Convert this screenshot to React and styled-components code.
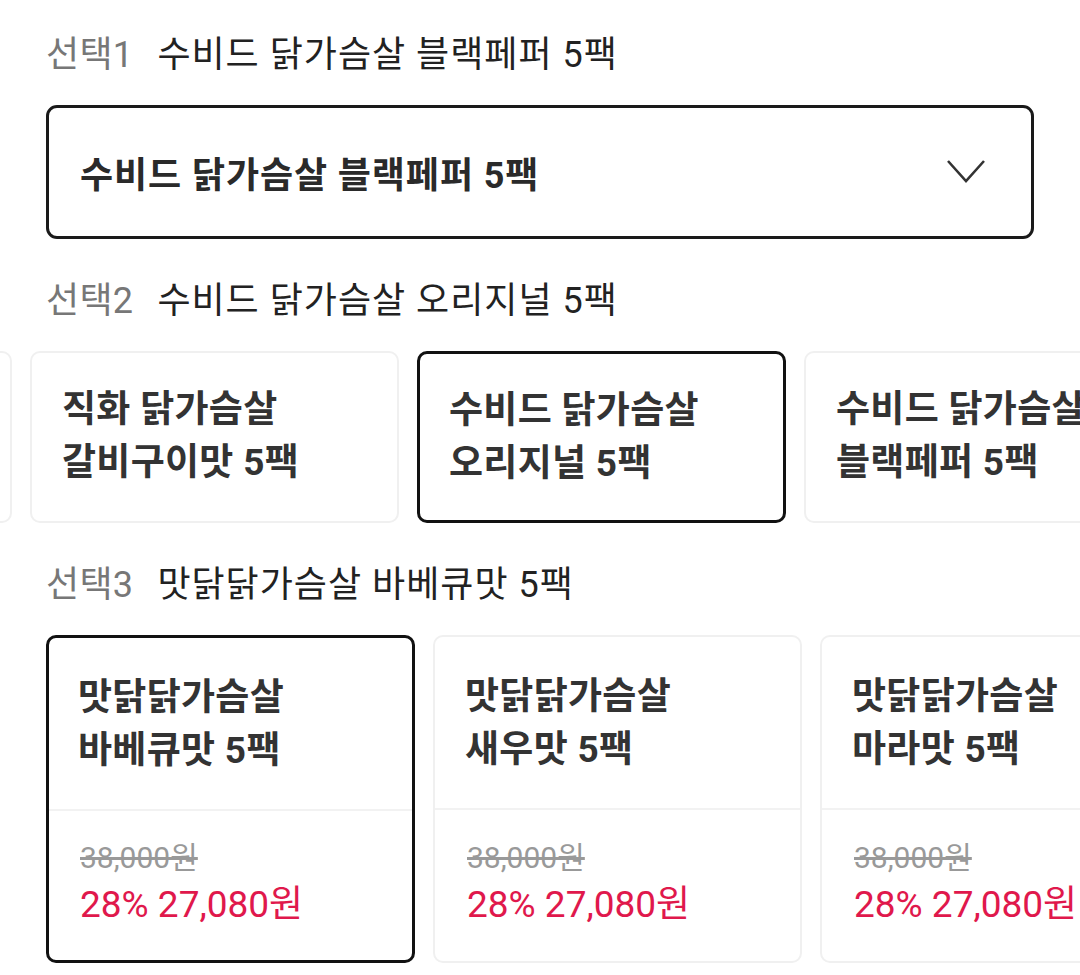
import { styled, createGlobalStyle } from "styled-components";

const GlobalStyle = createGlobalStyle`
  * { box-sizing: border-box; }
  html, body {
    margin: 0;
    padding: 0;
    background: #fff;
    font-family: Roboto, "Noto Sans CJK KR", "Noto Sans", sans-serif;
    color: #222;
    overflow: hidden;
  }
`;

const Page = styled.div`
  width: 1080px;
  padding: 33px 0 0;
  display: flex;
  flex-direction: column;
  gap: 40px;
`;

const Section = styled.section`
  display: flex;
  flex-direction: column;
  gap: 28px;
`;

const Heading = styled.div`
  padding-left: 46px;
  font-size: 36px;
  line-height: 44px;
  display: flex;
  gap: 24px;
  white-space: nowrap;
  letter-spacing: 1px;
`;

const StepLabel = styled.span`
  color: #777;
  letter-spacing: 0.3px;
`;

const StepValue = styled.span`
  color: #222;
`;

const SelectBox = styled.div`
  margin: 0 46px;
  height: 134px;
  border: 3px solid #1a1a1a;
  border-radius: 11px;
  display: flex;
  align-items: center;
  justify-content: space-between;
  padding: 0 45px 0 31px;
  font-size: 36px;
  font-weight: 700;
  color: #2a2a2a;
  letter-spacing: 0.9px;
`;

const Viewport = styled.div`
  width: 100%;
  overflow: hidden;
`;

const Track = styled.div`
  display: flex;
  gap: 18px;
  margin-left: ${(p) => p.$offset}px;
  width: max-content;
`;

const Card = styled.div`
  flex: 0 0 369px;
  width: 369px;
  height: ${(p) => p.$height}px;
  border-radius: 10px;
  border: ${(p) => (p.$selected ? "3px solid #111" : "2px solid #f0f0f0")};
  display: flex;
  flex-direction: column;
  background: #fff;
`;

const CardName = styled.div`
  height: ${(p) => p.$height}px;
  flex-shrink: 0;
  display: flex;
  flex-direction: column;
  justify-content: center;
  padding-left: ${(p) => (p.$selected ? 29 : 30)}px;
  font-size: 37px;
  font-weight: 700;
  line-height: 53px;
  color: #333;
  white-space: nowrap;
  letter-spacing: 0.3px;
`;

const PriceArea = styled.div`
  flex: 1;
  border-top: 2px solid #f2f2f2;
  display: flex;
  flex-direction: column;
  justify-content: center;
  padding: 0 0 6px ${(p) => (p.$selected ? 31 : 32)}px;
  gap: 6px;
  white-space: nowrap;
`;

const OldPrice = styled.div`
  font-size: 30px;
  line-height: 38px;
  color: #999;
  text-decoration: line-through;
`;

const SalePrice = styled.div`
  font-size: 37px;
  line-height: 44px;
  color: #e0184c;
`;

const Chevron = () => (
  <svg width="40" height="26" viewBox="0 0 40 26" fill="none">
    <path d="M2 2 L20 22 L38 2" stroke="#333" strokeWidth="2.6" strokeLinejoin="miter" />
  </svg>
);

const option2 = [
  null,
  ["직화 닭가슴살", "갈비구이맛 5팩"],
  ["수비드 닭가슴살", "오리지널 5팩"],
  ["수비드 닭가슴살", "블랙페퍼 5팩"],
];

const option3 = [
  ["맛닭닭가슴살", "바베큐맛 5팩"],
  ["맛닭닭가슴살", "새우맛 5팩"],
  ["맛닭닭가슴살", "마라맛 5팩"],
];

export default function App() {
  return (
    <>
      <GlobalStyle />
      <Page>
        <Section>
          <Heading>
            <StepLabel>선택1</StepLabel>
            <StepValue>수비드 닭가슴살 블랙페퍼 5팩</StepValue>
          </Heading>
          <SelectBox>
            <span>수비드 닭가슴살 블랙페퍼 5팩</span>
            <Chevron />
          </SelectBox>
        </Section>

        <Section>
          <Heading>
            <StepLabel>선택2</StepLabel>
            <StepValue>수비드 닭가슴살 오리지널 5팩</StepValue>
          </Heading>
          <Viewport>
            {/* scrolled list: first card is mostly off to the left */}
            <Track $offset={-357}>
              {option2.map((name, i) => (
                <Card key={i} $selected={i === 2} $height={172}>
                  {name && (
                    <CardName $height={166} $selected={i === 2}>
                      <span>{name[0]}</span>
                      <span>{name[1]}</span>
                    </CardName>
                  )}
                </Card>
              ))}
            </Track>
          </Viewport>
        </Section>

        <Section>
          <Heading>
            <StepLabel>선택3</StepLabel>
            <StepValue>맛닭닭가슴살 바베큐맛 5팩</StepValue>
          </Heading>
          <Viewport>
            <Track $offset={46}>
              {option3.map(([a, b], i) => (
                <Card key={i} $selected={i === 0} $height={328}>
                  <CardName $height={171} $selected={i === 0}>
                    <span>{a}</span>
                    <span>{b}</span>
                  </CardName>
                  <PriceArea $selected={i === 0}>
                    <OldPrice>38,000원</OldPrice>
                    <SalePrice>28% 27,080원</SalePrice>
                  </PriceArea>
                </Card>
              ))}
            </Track>
          </Viewport>
        </Section>
      </Page>
    </>
  );
}
